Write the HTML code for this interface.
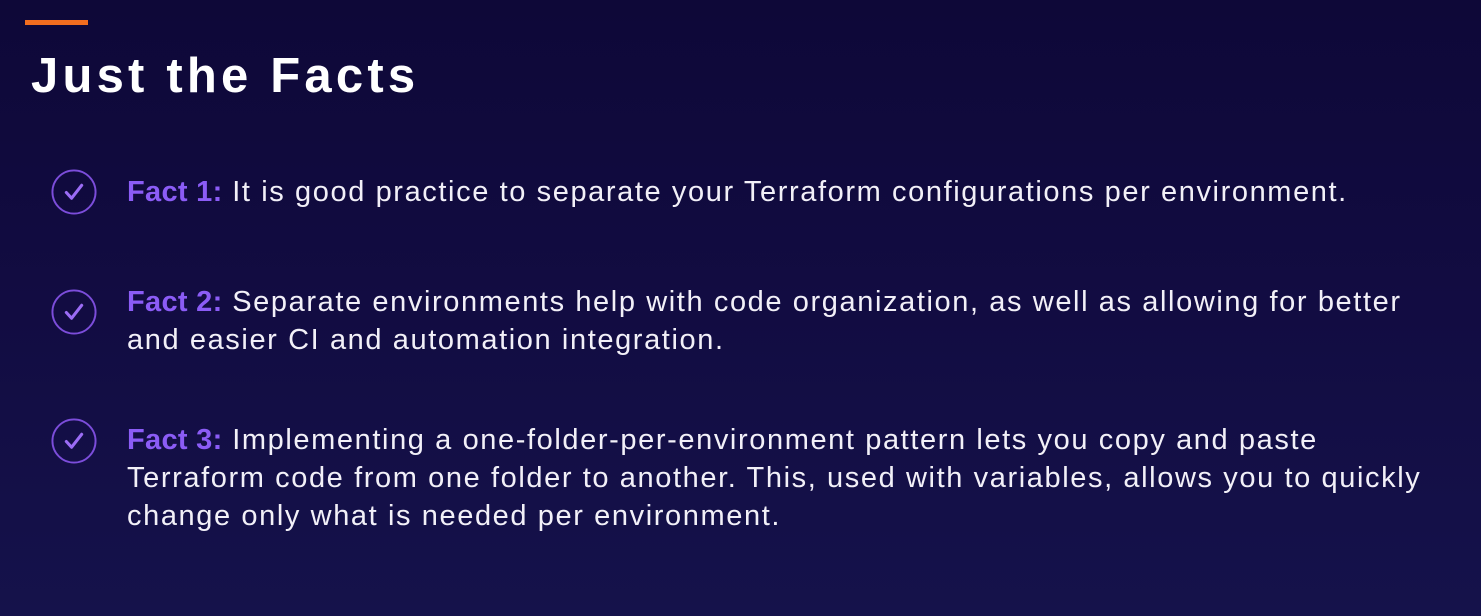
<!DOCTYPE html>
<html><head><style>
html,body{margin:0;padding:0}
body{width:1481px;height:616px;overflow:hidden;position:relative;background:linear-gradient(180deg,#0e0838 0%,#120c42 50%,#15124b 100%);font-family:"Liberation Sans",sans-serif;color:#fff}
.bar{position:absolute;left:25px;top:20px;width:63px;height:5px;background:#f26d1f}
h1{position:absolute;left:31px;top:46px;margin:0;font-size:49px;font-weight:bold;letter-spacing:4.2px;line-height:60px}
.item{position:absolute;left:127px;width:1320px;font-size:29px;letter-spacing:1.6px;line-height:38px;color:#f2f0f8}
.item b{color:#8b5cf6;letter-spacing:0.3px}
.chk{position:absolute;left:51px;width:46px;height:46px}
</style></head><body>
<div class="bar"></div>
<h1>Just the Facts</h1>
<svg class="chk" style="top:169px" viewBox="0 0 48 48"><circle cx="24" cy="24" r="22.5" fill="none" stroke="#7c4ddb" stroke-width="2"/><path d="M16 24.5l5.5 6L32 17" fill="none" stroke="#9b6cf5" stroke-width="3.2" stroke-linecap="round" stroke-linejoin="round"/></svg>
<div class="item" style="top:173px"><b>Fact 1:</b> It is good practice to separate your Terraform configurations per environment.</div>
<svg class="chk" style="top:289px" viewBox="0 0 48 48"><circle cx="24" cy="24" r="22.5" fill="none" stroke="#7c4ddb" stroke-width="2"/><path d="M16 24.5l5.5 6L32 17" fill="none" stroke="#9b6cf5" stroke-width="3.2" stroke-linecap="round" stroke-linejoin="round"/></svg>
<div class="item" style="top:283px"><b>Fact 2:</b> Separate environments help with code organization, as well as allowing for better<br>and easier CI and automation integration.</div>
<svg class="chk" style="top:418px" viewBox="0 0 48 48"><circle cx="24" cy="24" r="22.5" fill="none" stroke="#7c4ddb" stroke-width="2"/><path d="M16 24.5l5.5 6L32 17" fill="none" stroke="#9b6cf5" stroke-width="3.2" stroke-linecap="round" stroke-linejoin="round"/></svg>
<div class="item" style="top:421px"><b>Fact 3:</b> Implementing a one-folder-per-environment pattern lets you copy and paste<br>Terraform code from one folder to another. This, used with variables, allows you to quickly<br>change only what is needed per environment.</div>
</body></html>
